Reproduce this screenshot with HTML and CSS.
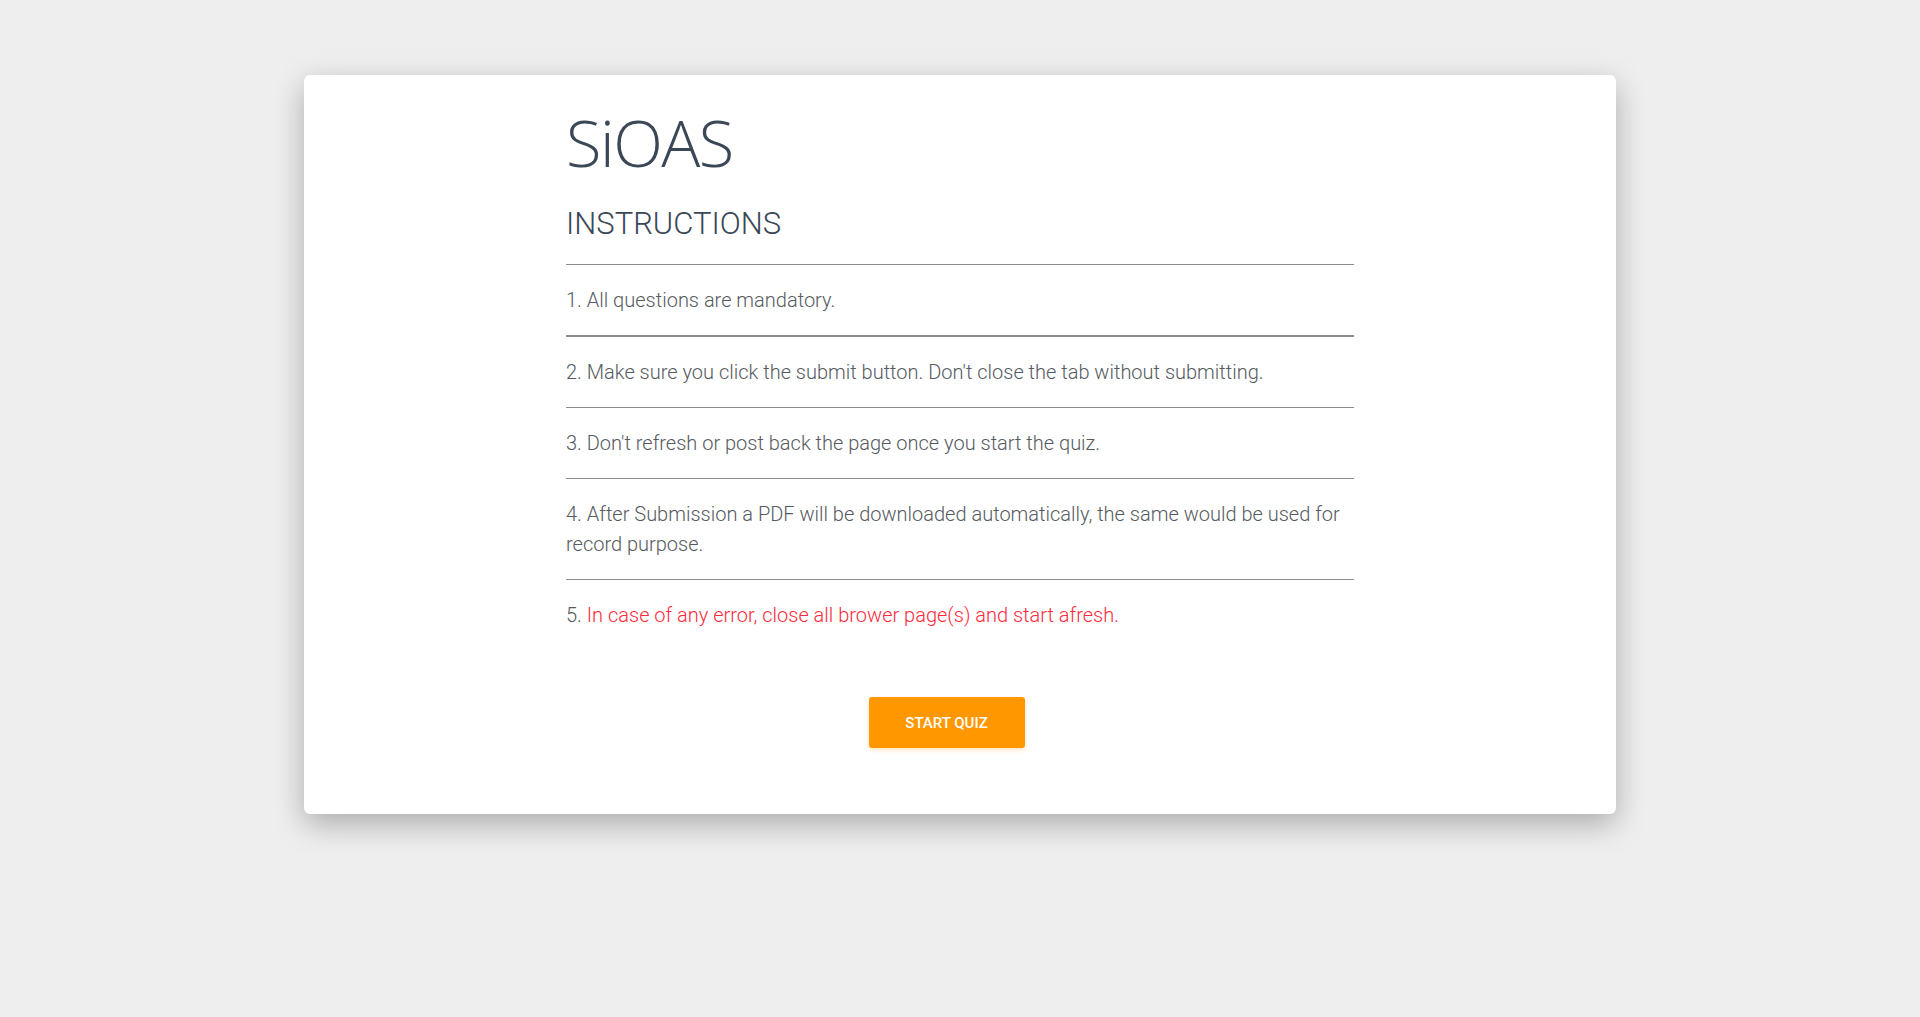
FILE: index.html
```html
<!DOCTYPE html>
<html lang="en">
<head>
<meta charset="utf-8">
<title>SiOAS - Instructions</title>
<link rel="stylesheet" href="styles.css">
</head>
<body>
<main class="card">
  <div class="content">
    <h1 class="brand">SiOAS</h1>
    <h2 class="section-title">INSTRUCTIONS</h2>
    <ul class="rules">
      <li>1. All questions are mandatory.</li>
      <li>2. Make sure you click the submit button. Don't close the tab without submitting.</li>
      <li>3. Don't refresh or post back the page once you start the quiz.</li>
      <li>4. After Submission a PDF will be downloaded automatically, the same would be used for record purpose.</li>
      <li>5. <span class="danger">In case of any error, close all brower page(s) and start afresh.</span></li>
    </ul>
    <div class="actions">
      <button class="btn-start" type="button">Start Quiz</button>
    </div>
  </div>
</main>
</body>
</html>
```

FILE: styles.css
```css
html, body {
  margin: 0;
  padding: 0;
}
body {
  background: #eeeeee;
  font-family: Roboto, "Liberation Sans", sans-serif;
  min-height: 1017px;
}
.card {
  width: 1312px;
  margin: 75px auto 0;
  background: #ffffff;
  border-radius: 6px;
  box-shadow: 0 10px 30px rgba(0, 0, 0, 0.28);
  padding: 35px 0 66px;
  box-sizing: border-box;
}
.content {
  width: 788px;
  margin: 0 auto;
}
.brand {
  margin: 0;
  font-family: "Open Sans", sans-serif;
  font-weight: 300;
  font-size: 65px;
  line-height: 1;
  color: #3a4757;
  letter-spacing: -1.5px;
}
.section-title {
  margin: 30px 0 22px;
  font-family: Roboto, sans-serif;
  font-weight: 300;
  font-size: 31px;
  line-height: 1.2;
  color: #3a4757;
}
.rules {
  list-style: none;
  margin: 0;
  padding: 0;
}
.rules li {
  border-top: 1px solid #8c8c8c;
  padding: 20px 0;
  font-size: 20px;
  font-weight: 300;
  line-height: 30px;
  color: #555a60;
}
.rules li:nth-child(2) {
  border-top-width: 2px;
}
.danger {
  color: #ff2a3b;
}
.actions {
  margin-top: 47px;
  padding-right: 27px;
  text-align: center;
}
.btn-start {
  width: 156px;
  height: 51px;
  border: 0;
  border-radius: 3px;
  background: #ff9800;
  color: #ffffff;
  font-family: Roboto, sans-serif;
  font-weight: 500;
  font-size: 15px;
  text-transform: uppercase;
  box-shadow: 0 2px 4px rgba(255, 152, 0, 0.25);
  cursor: pointer;
}
```
